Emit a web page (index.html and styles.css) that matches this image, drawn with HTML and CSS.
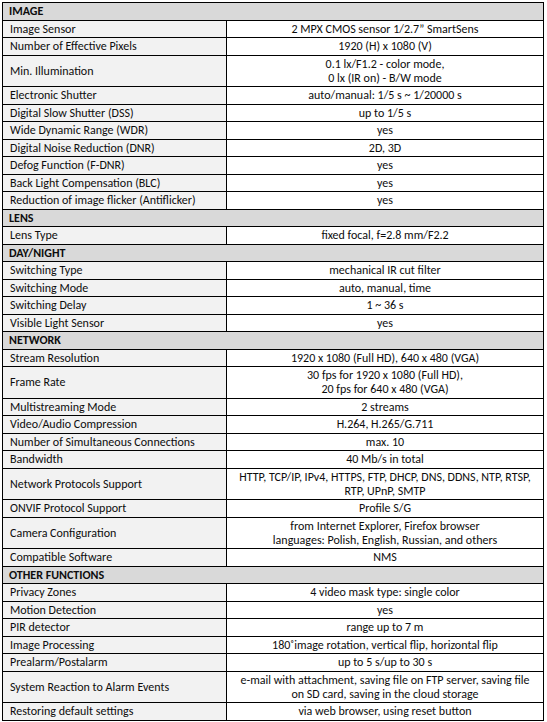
FILE: index.html
```html
<!DOCTYPE html>
<html lang="en">
<head>
<meta charset="utf-8">
<title>Specification</title>
<link rel="stylesheet" href="styles.css">
</head>
<body>
<div class="spec">
  <div class="sec">IMAGE</div>
  <div class="lbl">Image Sensor</div><div class="val">2 MPX CMOS sensor 1/2.7” SmartSens</div>
  <div class="lbl">Number of Effective Pixels</div><div class="val">1920 (H) x 1080 (V)</div>
  <div class="lbl">Min. Illumination</div><div class="val">0.1 lx/F1.2 - color mode,<br>0 lx (IR on) - B/W mode</div>
  <div class="lbl">Electronic Shutter</div><div class="val">auto/manual: 1/5 s ~ 1/20000 s</div>
  <div class="lbl">Digital Slow Shutter (DSS)</div><div class="val">up to 1/5 s</div>
  <div class="lbl">Wide Dynamic Range (WDR)</div><div class="val">yes</div>
  <div class="lbl">Digital Noise Reduction (DNR)</div><div class="val">2D, 3D</div>
  <div class="lbl">Defog Function (F-DNR)</div><div class="val">yes</div>
  <div class="lbl">Back Light Compensation (BLC)</div><div class="val">yes</div>
  <div class="lbl">Reduction of image flicker (Antiflicker)</div><div class="val">yes</div>
  <div class="sec">LENS</div>
  <div class="lbl">Lens Type</div><div class="val">fixed focal, f=2.8 mm/F2.2</div>
  <div class="sec">DAY/NIGHT</div>
  <div class="lbl">Switching Type</div><div class="val">mechanical IR cut filter</div>
  <div class="lbl">Switching Mode</div><div class="val">auto, manual, time</div>
  <div class="lbl">Switching Delay</div><div class="val">1 ~ 36 s</div>
  <div class="lbl">Visible Light Sensor</div><div class="val">yes</div>
  <div class="sec">NETWORK</div>
  <div class="lbl">Stream Resolution</div><div class="val">1920 x 1080 (Full HD), 640 x 480 (VGA)</div>
  <div class="lbl">Frame Rate</div><div class="val">30 fps for 1920 x 1080 (Full HD),<br>20 fps for 640 x 480 (VGA)</div>
  <div class="lbl">Multistreaming Mode</div><div class="val">2 streams</div>
  <div class="lbl">Video/Audio Compression</div><div class="val">H.264, H.265/G.711</div>
  <div class="lbl">Number of Simultaneous Connections</div><div class="val">max. 10</div>
  <div class="lbl">Bandwidth</div><div class="val">40 Mb/s in total</div>
  <div class="lbl">Network Protocols Support</div><div class="val">HTTP, TCP/IP, IPv4, HTTPS, FTP, DHCP, DNS, DDNS, NTP, RTSP,<br>RTP, UPnP, SMTP</div>
  <div class="lbl">ONVIF Protocol Support</div><div class="val">Profile S/G</div>
  <div class="lbl">Camera Configuration</div><div class="val">from Internet Explorer, Firefox browser<br>languages: Polish, English, Russian, and others</div>
  <div class="lbl">Compatible Software</div><div class="val">NMS</div>
  <div class="sec">OTHER FUNCTIONS</div>
  <div class="lbl">Privacy Zones</div><div class="val">4 video mask type: single color</div>
  <div class="lbl">Motion Detection</div><div class="val">yes</div>
  <div class="lbl">PIR detector</div><div class="val">range up to 7 m</div>
  <div class="lbl">Image Processing</div><div class="val">180˚image rotation, vertical flip, horizontal flip</div>
  <div class="lbl">Prealarm/Postalarm</div><div class="val">up to 5 s/up to 30 s</div>
  <div class="lbl">System Reaction to Alarm Events</div><div class="val">e-mail with attachment, saving file on FTP server, saving file<br>on SD card, saving in the cloud storage</div>
  <div class="lbl">Restoring default settings</div><div class="val">via web browser, using reset button</div>
</div>
</body>
</html>
```

FILE: styles.css
```css
html, body {
  margin: 0;
  padding: 0;
  background: #ffffff;
}

body {
  padding: 2px 0 0 2px;
  font-family: Carlito, Calibri, "Liberation Sans", Arial, sans-serif;
  font-size: 12px;
  color: #0d0d0d;
}

.spec {
  width: 540px;
  display: grid;
  grid-template-columns: 223px 1fr;
  grid-auto-rows: minmax(16.5px, auto);
  gap: 1px;
  padding: 1px;
  background: #000000;
}

.sec,
.lbl,
.val {
  line-height: 14px;
  padding: 1.25px 6px;
  display: flex;
  flex-direction: column;
  justify-content: center;
  white-space: nowrap;
}

.sec {
  grid-column: 1 / -1;
  background: #d9d9d9;
  font-weight: bold;
}

.lbl {
  background: #f2f2f2;
  padding-left: 7px;
}

.val {
  background: #ffffff;
  text-align: center;
  align-items: center;
}
```
